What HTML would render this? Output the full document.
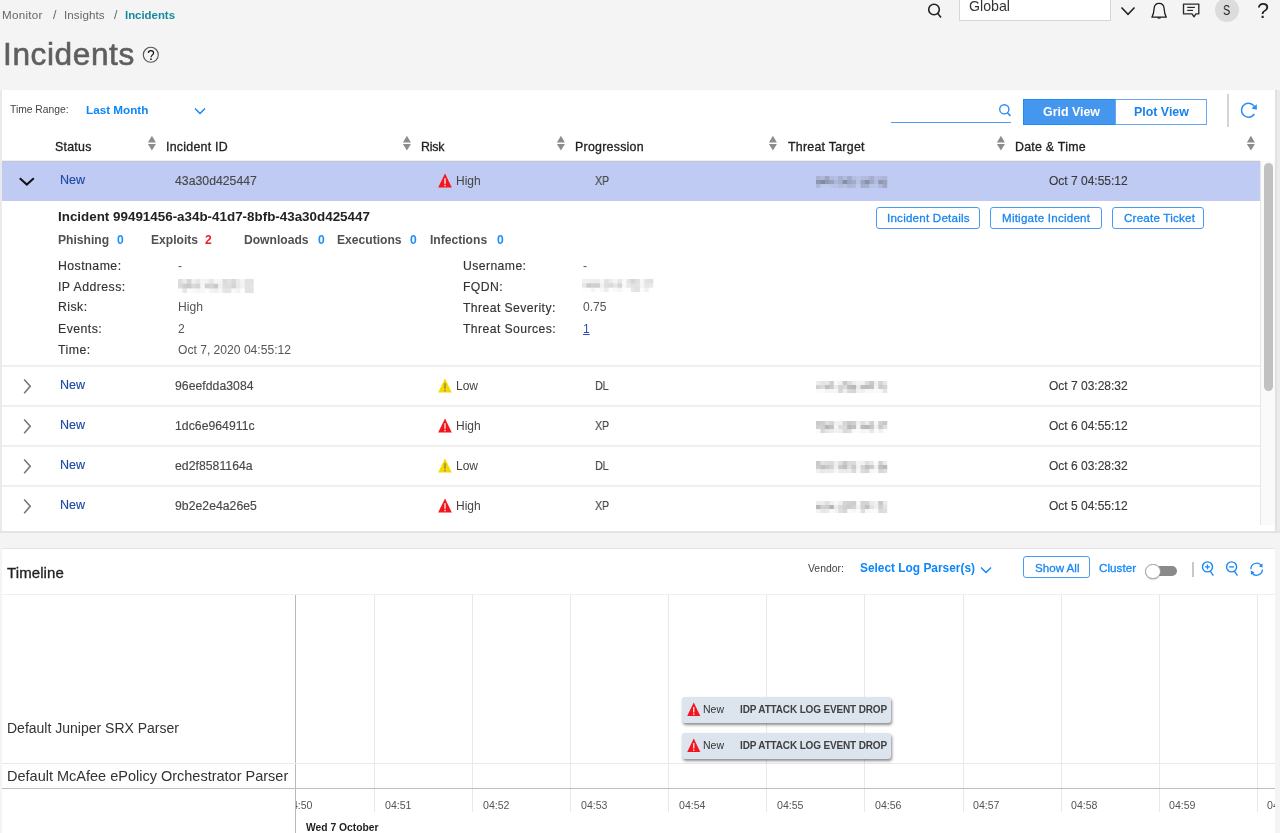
<!DOCTYPE html>
<html><head><meta charset="utf-8"><title>Incidents</title>
<style>
html,body{margin:0;padding:0}
body{width:1280px;height:833px;overflow:hidden;background:#f4f4f4;position:relative;font-family:'Liberation Sans', sans-serif}
.t{position:absolute;line-height:1;white-space:nowrap;will-change:transform}
.r{position:absolute}
svg.r{overflow:visible}
</style></head><body>
<div class="t" style="left:2.00px;top:8.98px;font-size:11.6px;color:#666;letter-spacing:0.3px;">Monitor</div>
<div class="t" style="left:53.00px;top:9.39px;font-size:12.3px;color:#666;">/</div>
<div class="t" style="left:64.00px;top:8.98px;font-size:11.6px;color:#666;letter-spacing:0.1px;">Insights</div>
<div class="t" style="left:113.50px;top:9.39px;font-size:12.3px;color:#666;">/</div>
<div class="t" style="left:125.00px;top:9.85px;font-size:11.4px;color:#168a9c;font-weight:700;">Incidents</div>
<div class="t" style="left:3.00px;top:38.95px;font-size:31.6px;color:#5e5e5e;letter-spacing:0.6px;-webkit-text-stroke:0.6px currentColor;">Incidents</div>
<svg class="r" style="left:142px;top:46px" width="18" height="18" viewBox="0 0 18 18"><circle cx="8.8" cy="8.8" r="7.5" fill="none" stroke="#555" stroke-width="1.1"/><path d="M6.3,6.9 C6.4,5.4 7.5,4.6 8.9,4.6 C10.5,4.6 11.6,5.5 11.6,6.9 C11.6,8.6 9.2,9.2 9.0,11.3" fill="none" stroke="#111" stroke-width="1.2"/><circle cx="8.95" cy="13.2" r="0.85" fill="#111"/></svg>
<svg class="r" style="left:926px;top:2px" width="18" height="18" viewBox="0 0 18 18"><circle cx="8" cy="7.5" r="5.3" fill="none" stroke="#222" stroke-width="1.6"/><line x1="11.6" y1="11.3" x2="15" y2="15.5" stroke="#222" stroke-width="1.6"/></svg>
<div class="r" style="left:959px;top:-1px;width:152px;height:22px;background:#fff;border:1px solid #d6d6d6;box-sizing:border-box"></div>
<div class="t" style="left:968.50px;top:-1.02px;font-size:14.2px;color:#333;">Global</div>
<svg class="r" style="left:1119px;top:4px" width="18" height="14" viewBox="0 0 18 14"><polyline points="2.5,3.5 9,10.3 15.5,3.5" fill="none" stroke="#222" stroke-width="1.6"/></svg>
<svg class="r" style="left:1149px;top:1px" width="20" height="20" viewBox="0 0 20 20"><path d="M10.1,2.4 C7.4,2.4 5.3,4.5 5.1,7.6 C4.9,11.2 4.5,13.2 2.9,16.2 L17.3,16.2 C15.7,13.2 15.3,11.2 15.1,7.6 C14.9,4.5 12.8,2.4 10.1,2.4 Z" fill="none" stroke="#1a1a1a" stroke-width="1.25" stroke-linejoin="round"/><path d="M8.4,16.3 Q10.1,18.2 11.8,16.3" fill="none" stroke="#1a1a1a" stroke-width="1.2"/></svg>
<svg class="r" style="left:1181px;top:1px" width="20" height="20" viewBox="0 0 20 20"><path d="M2.5,3.1 H17.8 V12.8 H14.9 L13,15.8 L11.1,12.8 H2.5 Z" fill="none" stroke="#2a2a2a" stroke-width="1.35" stroke-linejoin="round"/><line x1="6.2" y1="6.4" x2="13.9" y2="6.4" stroke="#2a2a2a" stroke-width="1.2"/><line x1="6.2" y1="9.4" x2="12" y2="9.4" stroke="#2a2a2a" stroke-width="1.2"/></svg>
<div class="r" style="left:1215px;top:-2px;width:24px;height:24px;border-radius:50%;background:#dcdcdc"></div>
<div class="t" style="left:1222.80px;top:2.98px;font-size:14.2px;color:#1a1a1a;transform:scaleX(0.76);transform-origin:0 0;">S</div>
<div class="t" style="left:1256.50px;top:0.70px;font-size:21.5px;color:#222;">?</div>
<div class="r" style="left:0px;top:90px;width:2px;height:443px;background:#eaeaea"></div>
<div class="r" style="left:1275px;top:90px;width:2px;height:443px;background:#e1e1e1"></div>
<div class="r" style="left:1277px;top:90px;width:3px;height:443px;background:#ebebeb"></div>
<div class="r" style="left:0px;top:531px;width:1280px;height:2px;background:#e3e3e3"></div>
<div class="r" style="left:2px;top:90px;width:1273px;height:441px;background:#fff"></div>
<div class="t" style="left:10.00px;top:105.28px;font-size:10.3px;color:#444;">Time Range:</div>
<div class="t" style="left:85.50px;top:104.20px;font-size:11.7px;color:#0c86fb;font-weight:700;">Last Month</div>
<svg class="r" style="left:193px;top:105px" width="14" height="12" viewBox="0 0 14 12"><polyline points="2,3.5 7,8.5 12,3.5" fill="none" stroke="#0c86fb" stroke-width="1.4"/></svg>
<div class="r" style="left:891px;top:122px;width:120px;height:1px;background:#4a9cf2"></div>
<svg class="r" style="left:997px;top:102px" width="16" height="16" viewBox="0 0 16 16"><circle cx="7.3" cy="7.3" r="4.6" fill="none" stroke="#2b8df5" stroke-width="1.4"/><line x1="10.5" y1="10.7" x2="13.5" y2="14" stroke="#2b8df5" stroke-width="1.6"/></svg>
<div class="r" style="left:1023px;top:99px;width:93px;height:26px;background:#4596ee;border:1px solid #1e8cf0;box-sizing:border-box"></div>
<div class="r" style="left:1115px;top:99px;width:92px;height:26px;background:#fff;border:1px solid #6aa6ee;box-sizing:border-box"></div>
<div class="t" style="left:1042.50px;top:106.30px;font-size:12.4px;color:#fff;font-weight:700;">Grid View</div>
<div class="t" style="left:1133.50px;top:106.30px;font-size:12.4px;color:#1a80ea;font-weight:700;">Plot View</div>
<div class="r" style="left:1227px;top:94px;width:2px;height:33px;background:#d4d4d4"></div>
<svg class="r" style="left:1239px;top:100px" width="20" height="20" viewBox="0 0 20 20"><path d="M16.2,8.2 A7,7 0 1 0 15.4,14" fill="none" stroke="#2b8df5" stroke-width="1.5"/><polygon points="17.8,4.2 17.8,9.8 12.4,8.6" fill="#2b8df5"/></svg>
<div class="t" style="left:55.00px;top:140.80px;font-size:12.4px;color:#222;-webkit-text-stroke:0.3px currentColor;letter-spacing:0.25px;">Status</div>
<div class="t" style="left:166.00px;top:140.80px;font-size:12.4px;color:#222;-webkit-text-stroke:0.3px currentColor;letter-spacing:0.25px;">Incident ID</div>
<div class="t" style="left:421.00px;top:140.80px;font-size:12.4px;color:#222;-webkit-text-stroke:0.3px currentColor;letter-spacing:0.25px;"><span style="letter-spacing:-0.2px">Risk</span></div>
<div class="t" style="left:575.00px;top:140.80px;font-size:12.4px;color:#222;-webkit-text-stroke:0.3px currentColor;letter-spacing:0.25px;">Progression</div>
<div class="t" style="left:787.50px;top:140.80px;font-size:12.4px;color:#222;-webkit-text-stroke:0.3px currentColor;letter-spacing:0.25px;">Threat Target</div>
<div class="t" style="left:1015.00px;top:140.80px;font-size:12.4px;color:#222;-webkit-text-stroke:0.3px currentColor;letter-spacing:0.25px;">Date &amp; Time</div>
<svg class="r" style="left:146.5px;top:135px" width="10" height="17" viewBox="0 0 10 17"><polygon points="4.9,0.7 8.9,7.5 0.9,7.5" fill="#8c8c8c"/><polygon points="0.9,9 8.9,9 4.9,15.4" fill="#8c8c8c"/></svg>
<svg class="r" style="left:401.5px;top:135px" width="10" height="17" viewBox="0 0 10 17"><polygon points="4.9,0.7 8.9,7.5 0.9,7.5" fill="#8c8c8c"/><polygon points="0.9,9 8.9,9 4.9,15.4" fill="#8c8c8c"/></svg>
<svg class="r" style="left:555.5px;top:135px" width="10" height="17" viewBox="0 0 10 17"><polygon points="4.9,0.7 8.9,7.5 0.9,7.5" fill="#8c8c8c"/><polygon points="0.9,9 8.9,9 4.9,15.4" fill="#8c8c8c"/></svg>
<svg class="r" style="left:768px;top:135px" width="10" height="17" viewBox="0 0 10 17"><polygon points="4.9,0.7 8.9,7.5 0.9,7.5" fill="#8c8c8c"/><polygon points="0.9,9 8.9,9 4.9,15.4" fill="#8c8c8c"/></svg>
<svg class="r" style="left:996px;top:135px" width="10" height="17" viewBox="0 0 10 17"><polygon points="4.9,0.7 8.9,7.5 0.9,7.5" fill="#8c8c8c"/><polygon points="0.9,9 8.9,9 4.9,15.4" fill="#8c8c8c"/></svg>
<svg class="r" style="left:1245.5px;top:135px" width="10" height="17" viewBox="0 0 10 17"><polygon points="4.9,0.7 8.9,7.5 0.9,7.5" fill="#8c8c8c"/><polygon points="0.9,9 8.9,9 4.9,15.4" fill="#8c8c8c"/></svg>
<div class="r" style="left:2px;top:160px;width:1258px;height:1px;background:#f0f0f0"></div>
<div class="r" style="left:2px;top:161px;width:1258px;height:40px;background:#bfcbf2;border-top:1px solid #c4c6d4;box-sizing:border-box"></div>
<svg class="r" style="left:17px;top:174px" width="20" height="14" viewBox="0 0 20 14"><polyline points="2.8,4.2 9.8,10.6 16.8,4.2" fill="none" stroke="#111" stroke-width="2"/></svg>
<div class="t" style="left:60.00px;top:174.32px;font-size:12.5px;color:#1d4aa6;-webkit-text-stroke:0.15px currentColor;">New</div>
<div class="t" style="left:175.00px;top:174.57px;font-size:12.2px;color:#484848;-webkit-text-stroke:0.15px currentColor;letter-spacing:0.05px;">43a30d425447</div>
<svg class="r" style="left:437.5px;top:174.2px" width="14" height="14" viewBox="0 0 14 14"><polygon points="7,-0.5 13.8,13.4 0.2,13.4" fill="#f5141e"/><rect x="6.3" y="4.2" width="1.4" height="5.6" fill="#fff" opacity=".9"/><rect x="6.3" y="10.8" width="1.4" height="1.5" fill="#fff" opacity=".9"/></svg>
<div class="t" style="left:455.50px;top:175.04px;font-size:12.0px;color:#444;">High</div>
<div class="t" style="left:595.30px;top:174.93px;font-size:12.6px;color:#484848;-webkit-text-stroke:0.15px currentColor;letter-spacing:-0.3px;transform:scaleX(0.86);transform-origin:0 0;">XP</div>
<div class="t" style="left:1048.50px;top:174.74px;font-size:12.0px;color:#3a3a3a;-webkit-text-stroke:0.15px currentColor;">Oct 7 04:55:12</div>
<svg class="r" style="left:816px;top:176px;filter:blur(0.7px)" width="71.20" height="12"><rect x="0.00" y="0.00" width="4.50" height="4.05" fill="#3a3a3a" fill-opacity="0.17"/><rect x="4.45" y="0.00" width="4.50" height="4.05" fill="#3a3a3a" fill-opacity="0.12"/><rect x="8.90" y="0.00" width="4.50" height="4.05" fill="#3a3a3a" fill-opacity="0.26"/><rect x="13.35" y="0.00" width="4.50" height="4.05" fill="#3a3a3a" fill-opacity="0.10"/><rect x="17.80" y="0.00" width="4.50" height="4.05" fill="#3a3a3a" fill-opacity="0.07"/><rect x="22.25" y="0.00" width="4.50" height="4.05" fill="#3a3a3a" fill-opacity="0.18"/><rect x="26.70" y="0.00" width="4.50" height="4.05" fill="#3a3a3a" fill-opacity="0.10"/><rect x="31.15" y="0.00" width="4.50" height="4.05" fill="#3a3a3a" fill-opacity="0.22"/><rect x="35.60" y="0.00" width="4.50" height="4.05" fill="#3a3a3a" fill-opacity="0.09"/><rect x="40.05" y="0.00" width="4.50" height="4.05" fill="#3a3a3a" fill-opacity="0.06"/><rect x="44.50" y="0.00" width="4.50" height="4.05" fill="#3a3a3a" fill-opacity="0.10"/><rect x="48.95" y="0.00" width="4.50" height="4.05" fill="#3a3a3a" fill-opacity="0.11"/><rect x="53.40" y="0.00" width="4.50" height="4.05" fill="#3a3a3a" fill-opacity="0.20"/><rect x="57.85" y="0.00" width="4.50" height="4.05" fill="#3a3a3a" fill-opacity="0.09"/><rect x="62.30" y="0.00" width="4.50" height="4.05" fill="#3a3a3a" fill-opacity="0.11"/><rect x="66.75" y="0.00" width="4.50" height="4.05" fill="#3a3a3a" fill-opacity="0.14"/><rect x="0.00" y="4.00" width="4.50" height="4.05" fill="#3a3a3a" fill-opacity="0.36"/><rect x="4.45" y="4.00" width="4.50" height="4.05" fill="#3a3a3a" fill-opacity="0.45"/><rect x="8.90" y="4.00" width="4.50" height="4.05" fill="#3a3a3a" fill-opacity="0.34"/><rect x="13.35" y="4.00" width="4.50" height="4.05" fill="#3a3a3a" fill-opacity="0.29"/><rect x="17.80" y="4.00" width="4.50" height="4.05" fill="#3a3a3a" fill-opacity="0.14"/><rect x="22.25" y="4.00" width="4.50" height="4.05" fill="#3a3a3a" fill-opacity="0.19"/><rect x="26.70" y="4.00" width="4.50" height="4.05" fill="#3a3a3a" fill-opacity="0.42"/><rect x="31.15" y="4.00" width="4.50" height="4.05" fill="#3a3a3a" fill-opacity="0.26"/><rect x="35.60" y="4.00" width="4.50" height="4.05" fill="#3a3a3a" fill-opacity="0.22"/><rect x="40.05" y="4.00" width="4.50" height="4.05" fill="#3a3a3a" fill-opacity="0.06"/><rect x="44.50" y="4.00" width="4.50" height="4.05" fill="#3a3a3a" fill-opacity="0.27"/><rect x="48.95" y="4.00" width="4.50" height="4.05" fill="#3a3a3a" fill-opacity="0.41"/><rect x="53.40" y="4.00" width="4.50" height="4.05" fill="#3a3a3a" fill-opacity="0.23"/><rect x="57.85" y="4.00" width="4.50" height="4.05" fill="#3a3a3a" fill-opacity="0.10"/><rect x="62.30" y="4.00" width="4.50" height="4.05" fill="#3a3a3a" fill-opacity="0.36"/><rect x="66.75" y="4.00" width="4.50" height="4.05" fill="#3a3a3a" fill-opacity="0.28"/><rect x="0.00" y="8.00" width="4.50" height="4.05" fill="#3a3a3a" fill-opacity="0.13"/><rect x="4.45" y="8.00" width="4.50" height="4.05" fill="#3a3a3a" fill-opacity="0.02"/><rect x="8.90" y="8.00" width="4.50" height="4.05" fill="#3a3a3a" fill-opacity="0.02"/><rect x="13.35" y="8.00" width="4.50" height="4.05" fill="#3a3a3a" fill-opacity="0.04"/><rect x="17.80" y="8.00" width="4.50" height="4.05" fill="#3a3a3a" fill-opacity="0.05"/><rect x="22.25" y="8.00" width="4.50" height="4.05" fill="#3a3a3a" fill-opacity="0.10"/><rect x="26.70" y="8.00" width="4.50" height="4.05" fill="#3a3a3a" fill-opacity="0.07"/><rect x="31.15" y="8.00" width="4.50" height="4.05" fill="#3a3a3a" fill-opacity="0.14"/><rect x="35.60" y="8.00" width="4.50" height="4.05" fill="#3a3a3a" fill-opacity="0.11"/><rect x="40.05" y="8.00" width="4.50" height="4.05" fill="#3a3a3a" fill-opacity="0.02"/><rect x="44.50" y="8.00" width="4.50" height="4.05" fill="#3a3a3a" fill-opacity="0.20"/><rect x="48.95" y="8.00" width="4.50" height="4.05" fill="#3a3a3a" fill-opacity="0.18"/><rect x="53.40" y="8.00" width="4.50" height="4.05" fill="#3a3a3a" fill-opacity="0.05"/><rect x="57.85" y="8.00" width="4.50" height="4.05" fill="#3a3a3a" fill-opacity="0.04"/><rect x="62.30" y="8.00" width="4.50" height="4.05" fill="#3a3a3a" fill-opacity="0.13"/><rect x="66.75" y="8.00" width="4.50" height="4.05" fill="#3a3a3a" fill-opacity="0.23"/></svg>
<div class="t" style="left:58.00px;top:210.06px;font-size:13.4px;color:#222;font-weight:700;">Incident 99491456-a34b-41d7-8bfb-43a30d425447</div>
<div class="t" style="left:57.60px;top:234.46px;font-size:12.1px;color:#505050;font-weight:700;">Phishing</div>
<div class="t" style="left:116.60px;top:234.46px;font-size:12.1px;color:#1e8ef5;font-weight:700;">0</div>
<div class="t" style="left:150.60px;top:234.46px;font-size:12.1px;color:#505050;font-weight:700;">Exploits</div>
<div class="t" style="left:205.10px;top:234.46px;font-size:12.1px;color:#e8202a;font-weight:700;">2</div>
<div class="t" style="left:243.60px;top:234.46px;font-size:12.1px;color:#505050;font-weight:700;">Downloads</div>
<div class="t" style="left:317.50px;top:234.46px;font-size:12.1px;color:#1e8ef5;font-weight:700;">0</div>
<div class="t" style="left:336.60px;top:234.46px;font-size:12.1px;color:#505050;font-weight:700;">Executions</div>
<div class="t" style="left:410.10px;top:234.46px;font-size:12.1px;color:#1e8ef5;font-weight:700;">0</div>
<div class="t" style="left:430.10px;top:234.46px;font-size:12.1px;color:#505050;font-weight:700;">Infections</div>
<div class="t" style="left:497.40px;top:234.46px;font-size:12.1px;color:#1e8ef5;font-weight:700;">0</div>
<div class="r" style="left:876px;top:207px;width:104px;height:22px;background:#fff;border:1px solid #4a9cf2;border-radius:3px;box-sizing:border-box"></div>
<div class="t" style="left:887.00px;top:211.88px;font-size:11.6px;color:#1a86f0;-webkit-text-stroke:0.3px currentColor;letter-spacing:0.22px;">Incident Details</div>
<div class="r" style="left:990px;top:207px;width:112px;height:22px;background:#fff;border:1px solid #4a9cf2;border-radius:3px;box-sizing:border-box"></div>
<div class="t" style="left:1001.50px;top:211.88px;font-size:11.6px;color:#1a86f0;-webkit-text-stroke:0.3px currentColor;letter-spacing:0.22px;">Mitigate Incident</div>
<div class="r" style="left:1112px;top:207px;width:92px;height:22px;background:#fff;border:1px solid #4a9cf2;border-radius:3px;box-sizing:border-box"></div>
<div class="t" style="left:1123.50px;top:211.88px;font-size:11.6px;color:#1a86f0;-webkit-text-stroke:0.3px currentColor;letter-spacing:0.22px;">Create Ticket</div>
<div class="t" style="left:57.80px;top:259.89px;font-size:12.3px;color:#333;-webkit-text-stroke:0.15px currentColor;letter-spacing:0.45px;">Hostname:</div>
<div class="t" style="left:178.00px;top:259.66px;font-size:12.1px;color:#555;">-</div>
<div class="t" style="left:57.80px;top:280.79px;font-size:12.3px;color:#333;-webkit-text-stroke:0.15px currentColor;letter-spacing:0.45px;">IP Address:</div>
<div class="t" style="left:57.80px;top:301.49px;font-size:12.3px;color:#333;-webkit-text-stroke:0.15px currentColor;letter-spacing:0.45px;">Risk:</div>
<div class="t" style="left:178.00px;top:301.26px;font-size:12.1px;color:#555;">High</div>
<div class="t" style="left:57.80px;top:322.79px;font-size:12.3px;color:#333;-webkit-text-stroke:0.15px currentColor;letter-spacing:0.45px;">Events:</div>
<div class="t" style="left:178.00px;top:322.56px;font-size:12.1px;color:#555;">2</div>
<div class="t" style="left:57.80px;top:343.99px;font-size:12.3px;color:#333;-webkit-text-stroke:0.15px currentColor;letter-spacing:0.45px;">Time:</div>
<div class="t" style="left:178.00px;top:343.76px;font-size:12.1px;color:#555;">Oct 7, 2020 04:55:12</div>
<svg class="r" style="left:178px;top:279px;filter:blur(0.7px)" width="75.65" height="14"><rect x="0.00" y="0.00" width="4.50" height="4.72" fill="#3a3a3a" fill-opacity="0.17"/><rect x="4.45" y="0.00" width="4.50" height="4.72" fill="#3a3a3a" fill-opacity="0.10"/><rect x="8.90" y="0.00" width="4.50" height="4.72" fill="#3a3a3a" fill-opacity="0.21"/><rect x="13.35" y="0.00" width="4.50" height="4.72" fill="#3a3a3a" fill-opacity="0.07"/><rect x="17.80" y="0.00" width="4.50" height="4.72" fill="#3a3a3a" fill-opacity="0.12"/><rect x="22.25" y="0.00" width="4.50" height="4.72" fill="#3a3a3a" fill-opacity="0.05"/><rect x="26.70" y="0.00" width="4.50" height="4.72" fill="#3a3a3a" fill-opacity="0.07"/><rect x="31.15" y="0.00" width="4.50" height="4.72" fill="#3a3a3a" fill-opacity="0.13"/><rect x="35.60" y="0.00" width="4.50" height="4.72" fill="#3a3a3a" fill-opacity="0.05"/><rect x="40.05" y="0.00" width="4.50" height="4.72" fill="#3a3a3a" fill-opacity="0.05"/><rect x="44.50" y="0.00" width="4.50" height="4.72" fill="#3a3a3a" fill-opacity="0.18"/><rect x="48.95" y="0.00" width="4.50" height="4.72" fill="#3a3a3a" fill-opacity="0.14"/><rect x="53.40" y="0.00" width="4.50" height="4.72" fill="#3a3a3a" fill-opacity="0.20"/><rect x="57.85" y="0.00" width="4.50" height="4.72" fill="#3a3a3a" fill-opacity="0.10"/><rect x="62.30" y="0.00" width="4.50" height="4.72" fill="#3a3a3a" fill-opacity="0.05"/><rect x="66.75" y="0.00" width="4.50" height="4.72" fill="#3a3a3a" fill-opacity="0.15"/><rect x="71.20" y="0.00" width="4.50" height="4.72" fill="#3a3a3a" fill-opacity="0.15"/><rect x="0.00" y="4.67" width="4.50" height="4.72" fill="#3a3a3a" fill-opacity="0.18"/><rect x="4.45" y="4.67" width="4.50" height="4.72" fill="#3a3a3a" fill-opacity="0.25"/><rect x="8.90" y="4.67" width="4.50" height="4.72" fill="#3a3a3a" fill-opacity="0.27"/><rect x="13.35" y="4.67" width="4.50" height="4.72" fill="#3a3a3a" fill-opacity="0.19"/><rect x="17.80" y="4.67" width="4.50" height="4.72" fill="#3a3a3a" fill-opacity="0.22"/><rect x="22.25" y="4.67" width="4.50" height="4.72" fill="#3a3a3a" fill-opacity="0.04"/><rect x="26.70" y="4.67" width="4.50" height="4.72" fill="#3a3a3a" fill-opacity="0.23"/><rect x="31.15" y="4.67" width="4.50" height="4.72" fill="#3a3a3a" fill-opacity="0.22"/><rect x="35.60" y="4.67" width="4.50" height="4.72" fill="#3a3a3a" fill-opacity="0.27"/><rect x="40.05" y="4.67" width="4.50" height="4.72" fill="#3a3a3a" fill-opacity="0.07"/><rect x="44.50" y="4.67" width="4.50" height="4.72" fill="#3a3a3a" fill-opacity="0.16"/><rect x="48.95" y="4.67" width="4.50" height="4.72" fill="#3a3a3a" fill-opacity="0.17"/><rect x="53.40" y="4.67" width="4.50" height="4.72" fill="#3a3a3a" fill-opacity="0.22"/><rect x="57.85" y="4.67" width="4.50" height="4.72" fill="#3a3a3a" fill-opacity="0.11"/><rect x="62.30" y="4.67" width="4.50" height="4.72" fill="#3a3a3a" fill-opacity="0.06"/><rect x="66.75" y="4.67" width="4.50" height="4.72" fill="#3a3a3a" fill-opacity="0.14"/><rect x="71.20" y="4.67" width="4.50" height="4.72" fill="#3a3a3a" fill-opacity="0.13"/><rect x="0.00" y="9.33" width="4.50" height="4.72" fill="#3a3a3a" fill-opacity="0.01"/><rect x="4.45" y="9.33" width="4.50" height="4.72" fill="#3a3a3a" fill-opacity="0.12"/><rect x="8.90" y="9.33" width="4.50" height="4.72" fill="#3a3a3a" fill-opacity="0.01"/><rect x="13.35" y="9.33" width="4.50" height="4.72" fill="#3a3a3a" fill-opacity="0.03"/><rect x="17.80" y="9.33" width="4.50" height="4.72" fill="#3a3a3a" fill-opacity="0.05"/><rect x="22.25" y="9.33" width="4.50" height="4.72" fill="#3a3a3a" fill-opacity="0.04"/><rect x="26.70" y="9.33" width="4.50" height="4.72" fill="#3a3a3a" fill-opacity="0.01"/><rect x="31.15" y="9.33" width="4.50" height="4.72" fill="#3a3a3a" fill-opacity="0.06"/><rect x="35.60" y="9.33" width="4.50" height="4.72" fill="#3a3a3a" fill-opacity="0.08"/><rect x="40.05" y="9.33" width="4.50" height="4.72" fill="#3a3a3a" fill-opacity="0.04"/><rect x="44.50" y="9.33" width="4.50" height="4.72" fill="#3a3a3a" fill-opacity="0.13"/><rect x="48.95" y="9.33" width="4.50" height="4.72" fill="#3a3a3a" fill-opacity="0.13"/><rect x="53.40" y="9.33" width="4.50" height="4.72" fill="#3a3a3a" fill-opacity="0.03"/><rect x="57.85" y="9.33" width="4.50" height="4.72" fill="#3a3a3a" fill-opacity="0.06"/><rect x="62.30" y="9.33" width="4.50" height="4.72" fill="#3a3a3a" fill-opacity="0.01"/><rect x="66.75" y="9.33" width="4.50" height="4.72" fill="#3a3a3a" fill-opacity="0.14"/><rect x="71.20" y="9.33" width="4.50" height="4.72" fill="#3a3a3a" fill-opacity="0.15"/></svg>
<div class="t" style="left:462.80px;top:259.97px;font-size:12.2px;color:#333;-webkit-text-stroke:0.15px currentColor;letter-spacing:0.42px;">Username:</div>
<div class="t" style="left:582.50px;top:259.66px;font-size:12.1px;color:#555;">-</div>
<div class="t" style="left:462.80px;top:280.87px;font-size:12.2px;color:#333;-webkit-text-stroke:0.15px currentColor;letter-spacing:0.42px;">FQDN:</div>
<div class="t" style="left:462.80px;top:301.57px;font-size:12.2px;color:#333;-webkit-text-stroke:0.15px currentColor;letter-spacing:0.42px;">Threat Severity:</div>
<div class="t" style="left:582.50px;top:301.26px;font-size:12.1px;color:#555;">0.75</div>
<div class="t" style="left:462.80px;top:322.87px;font-size:12.2px;color:#333;-webkit-text-stroke:0.15px currentColor;letter-spacing:0.42px;">Threat Sources:</div>
<div class="t" style="left:582.50px;top:322.56px;font-size:12.1px;color:#2a4fb0;"><u>1</u></div>
<svg class="r" style="left:582px;top:279px;filter:blur(0.7px)" width="71.20" height="13"><rect x="0.00" y="0.00" width="4.50" height="4.38" fill="#3a3a3a" fill-opacity="0.07"/><rect x="4.45" y="0.00" width="4.50" height="4.38" fill="#3a3a3a" fill-opacity="0.08"/><rect x="8.90" y="0.00" width="4.50" height="4.38" fill="#3a3a3a" fill-opacity="0.09"/><rect x="13.35" y="0.00" width="4.50" height="4.38" fill="#3a3a3a" fill-opacity="0.09"/><rect x="17.80" y="0.00" width="4.50" height="4.38" fill="#3a3a3a" fill-opacity="0.04"/><rect x="22.25" y="0.00" width="4.50" height="4.38" fill="#3a3a3a" fill-opacity="0.15"/><rect x="26.70" y="0.00" width="4.50" height="4.38" fill="#3a3a3a" fill-opacity="0.09"/><rect x="31.15" y="0.00" width="4.50" height="4.38" fill="#3a3a3a" fill-opacity="0.05"/><rect x="35.60" y="0.00" width="4.50" height="4.38" fill="#3a3a3a" fill-opacity="0.12"/><rect x="40.05" y="0.00" width="4.50" height="4.38" fill="#3a3a3a" fill-opacity="0.03"/><rect x="44.50" y="0.00" width="4.50" height="4.38" fill="#3a3a3a" fill-opacity="0.14"/><rect x="48.95" y="0.00" width="4.50" height="4.38" fill="#3a3a3a" fill-opacity="0.21"/><rect x="53.40" y="0.00" width="4.50" height="4.38" fill="#3a3a3a" fill-opacity="0.16"/><rect x="57.85" y="0.00" width="4.50" height="4.38" fill="#3a3a3a" fill-opacity="0.04"/><rect x="62.30" y="0.00" width="4.50" height="4.38" fill="#3a3a3a" fill-opacity="0.15"/><rect x="66.75" y="0.00" width="4.50" height="4.38" fill="#3a3a3a" fill-opacity="0.16"/><rect x="0.00" y="4.33" width="4.50" height="4.38" fill="#3a3a3a" fill-opacity="0.12"/><rect x="4.45" y="4.33" width="4.50" height="4.38" fill="#3a3a3a" fill-opacity="0.26"/><rect x="8.90" y="4.33" width="4.50" height="4.38" fill="#3a3a3a" fill-opacity="0.24"/><rect x="13.35" y="4.33" width="4.50" height="4.38" fill="#3a3a3a" fill-opacity="0.25"/><rect x="17.80" y="4.33" width="4.50" height="4.38" fill="#3a3a3a" fill-opacity="0.07"/><rect x="22.25" y="4.33" width="4.50" height="4.38" fill="#3a3a3a" fill-opacity="0.17"/><rect x="26.70" y="4.33" width="4.50" height="4.38" fill="#3a3a3a" fill-opacity="0.18"/><rect x="31.15" y="4.33" width="4.50" height="4.38" fill="#3a3a3a" fill-opacity="0.13"/><rect x="35.60" y="4.33" width="4.50" height="4.38" fill="#3a3a3a" fill-opacity="0.21"/><rect x="40.05" y="4.33" width="4.50" height="4.38" fill="#3a3a3a" fill-opacity="0.04"/><rect x="44.50" y="4.33" width="4.50" height="4.38" fill="#3a3a3a" fill-opacity="0.12"/><rect x="48.95" y="4.33" width="4.50" height="4.38" fill="#3a3a3a" fill-opacity="0.14"/><rect x="53.40" y="4.33" width="4.50" height="4.38" fill="#3a3a3a" fill-opacity="0.14"/><rect x="57.85" y="4.33" width="4.50" height="4.38" fill="#3a3a3a" fill-opacity="0.05"/><rect x="62.30" y="4.33" width="4.50" height="4.38" fill="#3a3a3a" fill-opacity="0.12"/><rect x="66.75" y="4.33" width="4.50" height="4.38" fill="#3a3a3a" fill-opacity="0.11"/><rect x="0.00" y="8.67" width="4.50" height="4.38" fill="#3a3a3a" fill-opacity="0.01"/><rect x="4.45" y="8.67" width="4.50" height="4.38" fill="#3a3a3a" fill-opacity="0.01"/><rect x="8.90" y="8.67" width="4.50" height="4.38" fill="#3a3a3a" fill-opacity="0.05"/><rect x="13.35" y="8.67" width="4.50" height="4.38" fill="#3a3a3a" fill-opacity="0.01"/><rect x="17.80" y="8.67" width="4.50" height="4.38" fill="#3a3a3a" fill-opacity="0.04"/><rect x="22.25" y="8.67" width="4.50" height="4.38" fill="#3a3a3a" fill-opacity="0.09"/><rect x="26.70" y="8.67" width="4.50" height="4.38" fill="#3a3a3a" fill-opacity="0.01"/><rect x="31.15" y="8.67" width="4.50" height="4.38" fill="#3a3a3a" fill-opacity="0.03"/><rect x="35.60" y="8.67" width="4.50" height="4.38" fill="#3a3a3a" fill-opacity="0.05"/><rect x="40.05" y="8.67" width="4.50" height="4.38" fill="#3a3a3a" fill-opacity="0.01"/><rect x="44.50" y="8.67" width="4.50" height="4.38" fill="#3a3a3a" fill-opacity="0.01"/><rect x="48.95" y="8.67" width="4.50" height="4.38" fill="#3a3a3a" fill-opacity="0.13"/><rect x="53.40" y="8.67" width="4.50" height="4.38" fill="#3a3a3a" fill-opacity="0.15"/><rect x="57.85" y="8.67" width="4.50" height="4.38" fill="#3a3a3a" fill-opacity="0.02"/><rect x="62.30" y="8.67" width="4.50" height="4.38" fill="#3a3a3a" fill-opacity="0.07"/><rect x="66.75" y="8.67" width="4.50" height="4.38" fill="#3a3a3a" fill-opacity="0.01"/></svg>
<div class="r" style="left:2px;top:365px;width:1258px;height:2px;background:#f0f0f0"></div>
<svg class="r" style="left:20px;top:377px" width="14" height="20" viewBox="0 0 14 20"><polyline points="4.2,2.5 10.2,9.3 4.2,16.3" fill="none" stroke="#777" stroke-width="1.6"/></svg>
<div class="t" style="left:60.00px;top:379.32px;font-size:12.5px;color:#1d4aa6;-webkit-text-stroke:0.15px currentColor;">New</div>
<div class="t" style="left:175.00px;top:379.57px;font-size:12.2px;color:#484848;-webkit-text-stroke:0.15px currentColor;letter-spacing:0.05px;">96eefdda3084</div>
<svg class="r" style="left:437.5px;top:379.0px" width="14" height="14" viewBox="0 0 14 14"><polygon points="7,-0.5 13.8,13.4 0.2,13.4" fill="#f7d700"/><rect x="6.3" y="4.2" width="1.4" height="5.6" fill="#777" opacity=".9"/><rect x="6.3" y="10.8" width="1.4" height="1.5" fill="#777" opacity=".9"/></svg>
<div class="t" style="left:455.50px;top:380.04px;font-size:12.0px;color:#444;">Low</div>
<div class="t" style="left:595.30px;top:379.93px;font-size:12.6px;color:#484848;-webkit-text-stroke:0.15px currentColor;letter-spacing:-0.3px;transform:scaleX(0.86);transform-origin:0 0;">DL</div>
<div class="t" style="left:1048.50px;top:379.74px;font-size:12.0px;color:#3a3a3a;-webkit-text-stroke:0.15px currentColor;">Oct 7 03:28:32</div>
<svg class="r" style="left:816px;top:381px;filter:blur(0.7px)" width="71.20" height="12"><rect x="0.00" y="0.00" width="4.50" height="4.05" fill="#3a3a3a" fill-opacity="0.09"/><rect x="4.45" y="0.00" width="4.50" height="4.05" fill="#3a3a3a" fill-opacity="0.14"/><rect x="8.90" y="0.00" width="4.50" height="4.05" fill="#3a3a3a" fill-opacity="0.12"/><rect x="13.35" y="0.00" width="4.50" height="4.05" fill="#3a3a3a" fill-opacity="0.25"/><rect x="17.80" y="0.00" width="4.50" height="4.05" fill="#3a3a3a" fill-opacity="0.03"/><rect x="22.25" y="0.00" width="4.50" height="4.05" fill="#3a3a3a" fill-opacity="0.07"/><rect x="26.70" y="0.00" width="4.50" height="4.05" fill="#3a3a3a" fill-opacity="0.28"/><rect x="31.15" y="0.00" width="4.50" height="4.05" fill="#3a3a3a" fill-opacity="0.18"/><rect x="35.60" y="0.00" width="4.50" height="4.05" fill="#3a3a3a" fill-opacity="0.10"/><rect x="40.05" y="0.00" width="4.50" height="4.05" fill="#3a3a3a" fill-opacity="0.06"/><rect x="44.50" y="0.00" width="4.50" height="4.05" fill="#3a3a3a" fill-opacity="0.07"/><rect x="48.95" y="0.00" width="4.50" height="4.05" fill="#3a3a3a" fill-opacity="0.18"/><rect x="53.40" y="0.00" width="4.50" height="4.05" fill="#3a3a3a" fill-opacity="0.28"/><rect x="57.85" y="0.00" width="4.50" height="4.05" fill="#3a3a3a" fill-opacity="0.08"/><rect x="62.30" y="0.00" width="4.50" height="4.05" fill="#3a3a3a" fill-opacity="0.22"/><rect x="66.75" y="0.00" width="4.50" height="4.05" fill="#3a3a3a" fill-opacity="0.12"/><rect x="0.00" y="4.00" width="4.50" height="4.05" fill="#3a3a3a" fill-opacity="0.23"/><rect x="4.45" y="4.00" width="4.50" height="4.05" fill="#3a3a3a" fill-opacity="0.18"/><rect x="8.90" y="4.00" width="4.50" height="4.05" fill="#3a3a3a" fill-opacity="0.32"/><rect x="13.35" y="4.00" width="4.50" height="4.05" fill="#3a3a3a" fill-opacity="0.26"/><rect x="17.80" y="4.00" width="4.50" height="4.05" fill="#3a3a3a" fill-opacity="0.10"/><rect x="22.25" y="4.00" width="4.50" height="4.05" fill="#3a3a3a" fill-opacity="0.22"/><rect x="26.70" y="4.00" width="4.50" height="4.05" fill="#3a3a3a" fill-opacity="0.19"/><rect x="31.15" y="4.00" width="4.50" height="4.05" fill="#3a3a3a" fill-opacity="0.33"/><rect x="35.60" y="4.00" width="4.50" height="4.05" fill="#3a3a3a" fill-opacity="0.36"/><rect x="40.05" y="4.00" width="4.50" height="4.05" fill="#3a3a3a" fill-opacity="0.10"/><rect x="44.50" y="4.00" width="4.50" height="4.05" fill="#3a3a3a" fill-opacity="0.32"/><rect x="48.95" y="4.00" width="4.50" height="4.05" fill="#3a3a3a" fill-opacity="0.33"/><rect x="53.40" y="4.00" width="4.50" height="4.05" fill="#3a3a3a" fill-opacity="0.31"/><rect x="57.85" y="4.00" width="4.50" height="4.05" fill="#3a3a3a" fill-opacity="0.06"/><rect x="62.30" y="4.00" width="4.50" height="4.05" fill="#3a3a3a" fill-opacity="0.26"/><rect x="66.75" y="4.00" width="4.50" height="4.05" fill="#3a3a3a" fill-opacity="0.22"/><rect x="0.00" y="8.00" width="4.50" height="4.05" fill="#3a3a3a" fill-opacity="0.02"/><rect x="4.45" y="8.00" width="4.50" height="4.05" fill="#3a3a3a" fill-opacity="0.02"/><rect x="8.90" y="8.00" width="4.50" height="4.05" fill="#3a3a3a" fill-opacity="0.05"/><rect x="13.35" y="8.00" width="4.50" height="4.05" fill="#3a3a3a" fill-opacity="0.04"/><rect x="17.80" y="8.00" width="4.50" height="4.05" fill="#3a3a3a" fill-opacity="0.04"/><rect x="22.25" y="8.00" width="4.50" height="4.05" fill="#3a3a3a" fill-opacity="0.20"/><rect x="26.70" y="8.00" width="4.50" height="4.05" fill="#3a3a3a" fill-opacity="0.08"/><rect x="31.15" y="8.00" width="4.50" height="4.05" fill="#3a3a3a" fill-opacity="0.19"/><rect x="35.60" y="8.00" width="4.50" height="4.05" fill="#3a3a3a" fill-opacity="0.21"/><rect x="40.05" y="8.00" width="4.50" height="4.05" fill="#3a3a3a" fill-opacity="0.06"/><rect x="44.50" y="8.00" width="4.50" height="4.05" fill="#3a3a3a" fill-opacity="0.07"/><rect x="48.95" y="8.00" width="4.50" height="4.05" fill="#3a3a3a" fill-opacity="0.03"/><rect x="53.40" y="8.00" width="4.50" height="4.05" fill="#3a3a3a" fill-opacity="0.03"/><rect x="57.85" y="8.00" width="4.50" height="4.05" fill="#3a3a3a" fill-opacity="0.02"/><rect x="62.30" y="8.00" width="4.50" height="4.05" fill="#3a3a3a" fill-opacity="0.03"/><rect x="66.75" y="8.00" width="4.50" height="4.05" fill="#3a3a3a" fill-opacity="0.12"/></svg>
<div class="r" style="left:2px;top:405px;width:1258px;height:2px;background:#f0f0f0"></div>
<svg class="r" style="left:20px;top:417px" width="14" height="20" viewBox="0 0 14 20"><polyline points="4.2,2.5 10.2,9.3 4.2,16.3" fill="none" stroke="#777" stroke-width="1.6"/></svg>
<div class="t" style="left:60.00px;top:419.32px;font-size:12.5px;color:#1d4aa6;-webkit-text-stroke:0.15px currentColor;">New</div>
<div class="t" style="left:175.00px;top:419.57px;font-size:12.2px;color:#484848;-webkit-text-stroke:0.15px currentColor;letter-spacing:0.05px;">1dc6e964911c</div>
<svg class="r" style="left:437.5px;top:419.2px" width="14" height="14" viewBox="0 0 14 14"><polygon points="7,-0.5 13.8,13.4 0.2,13.4" fill="#f5141e"/><rect x="6.3" y="4.2" width="1.4" height="5.6" fill="#fff" opacity=".9"/><rect x="6.3" y="10.8" width="1.4" height="1.5" fill="#fff" opacity=".9"/></svg>
<div class="t" style="left:455.50px;top:420.04px;font-size:12.0px;color:#444;">High</div>
<div class="t" style="left:595.30px;top:419.93px;font-size:12.6px;color:#484848;-webkit-text-stroke:0.15px currentColor;letter-spacing:-0.3px;transform:scaleX(0.86);transform-origin:0 0;">XP</div>
<div class="t" style="left:1048.50px;top:419.74px;font-size:12.0px;color:#3a3a3a;-webkit-text-stroke:0.15px currentColor;">Oct 6 04:55:12</div>
<svg class="r" style="left:816px;top:421px;filter:blur(0.7px)" width="71.20" height="12"><rect x="0.00" y="0.00" width="4.50" height="4.05" fill="#3a3a3a" fill-opacity="0.27"/><rect x="4.45" y="0.00" width="4.50" height="4.05" fill="#3a3a3a" fill-opacity="0.25"/><rect x="8.90" y="0.00" width="4.50" height="4.05" fill="#3a3a3a" fill-opacity="0.17"/><rect x="13.35" y="0.00" width="4.50" height="4.05" fill="#3a3a3a" fill-opacity="0.21"/><rect x="17.80" y="0.00" width="4.50" height="4.05" fill="#3a3a3a" fill-opacity="0.07"/><rect x="22.25" y="0.00" width="4.50" height="4.05" fill="#3a3a3a" fill-opacity="0.08"/><rect x="26.70" y="0.00" width="4.50" height="4.05" fill="#3a3a3a" fill-opacity="0.21"/><rect x="31.15" y="0.00" width="4.50" height="4.05" fill="#3a3a3a" fill-opacity="0.27"/><rect x="35.60" y="0.00" width="4.50" height="4.05" fill="#3a3a3a" fill-opacity="0.24"/><rect x="40.05" y="0.00" width="4.50" height="4.05" fill="#3a3a3a" fill-opacity="0.07"/><rect x="44.50" y="0.00" width="4.50" height="4.05" fill="#3a3a3a" fill-opacity="0.17"/><rect x="48.95" y="0.00" width="4.50" height="4.05" fill="#3a3a3a" fill-opacity="0.10"/><rect x="53.40" y="0.00" width="4.50" height="4.05" fill="#3a3a3a" fill-opacity="0.24"/><rect x="57.85" y="0.00" width="4.50" height="4.05" fill="#3a3a3a" fill-opacity="0.04"/><rect x="62.30" y="0.00" width="4.50" height="4.05" fill="#3a3a3a" fill-opacity="0.24"/><rect x="66.75" y="0.00" width="4.50" height="4.05" fill="#3a3a3a" fill-opacity="0.28"/><rect x="0.00" y="4.00" width="4.50" height="4.05" fill="#3a3a3a" fill-opacity="0.23"/><rect x="4.45" y="4.00" width="4.50" height="4.05" fill="#3a3a3a" fill-opacity="0.23"/><rect x="8.90" y="4.00" width="4.50" height="4.05" fill="#3a3a3a" fill-opacity="0.36"/><rect x="13.35" y="4.00" width="4.50" height="4.05" fill="#3a3a3a" fill-opacity="0.31"/><rect x="17.80" y="4.00" width="4.50" height="4.05" fill="#3a3a3a" fill-opacity="0.05"/><rect x="22.25" y="4.00" width="4.50" height="4.05" fill="#3a3a3a" fill-opacity="0.17"/><rect x="26.70" y="4.00" width="4.50" height="4.05" fill="#3a3a3a" fill-opacity="0.18"/><rect x="31.15" y="4.00" width="4.50" height="4.05" fill="#3a3a3a" fill-opacity="0.35"/><rect x="35.60" y="4.00" width="4.50" height="4.05" fill="#3a3a3a" fill-opacity="0.32"/><rect x="40.05" y="4.00" width="4.50" height="4.05" fill="#3a3a3a" fill-opacity="0.05"/><rect x="44.50" y="4.00" width="4.50" height="4.05" fill="#3a3a3a" fill-opacity="0.33"/><rect x="48.95" y="4.00" width="4.50" height="4.05" fill="#3a3a3a" fill-opacity="0.36"/><rect x="53.40" y="4.00" width="4.50" height="4.05" fill="#3a3a3a" fill-opacity="0.29"/><rect x="57.85" y="4.00" width="4.50" height="4.05" fill="#3a3a3a" fill-opacity="0.07"/><rect x="62.30" y="4.00" width="4.50" height="4.05" fill="#3a3a3a" fill-opacity="0.27"/><rect x="66.75" y="4.00" width="4.50" height="4.05" fill="#3a3a3a" fill-opacity="0.17"/><rect x="0.00" y="8.00" width="4.50" height="4.05" fill="#3a3a3a" fill-opacity="0.02"/><rect x="4.45" y="8.00" width="4.50" height="4.05" fill="#3a3a3a" fill-opacity="0.20"/><rect x="8.90" y="8.00" width="4.50" height="4.05" fill="#3a3a3a" fill-opacity="0.13"/><rect x="13.35" y="8.00" width="4.50" height="4.05" fill="#3a3a3a" fill-opacity="0.10"/><rect x="17.80" y="8.00" width="4.50" height="4.05" fill="#3a3a3a" fill-opacity="0.06"/><rect x="22.25" y="8.00" width="4.50" height="4.05" fill="#3a3a3a" fill-opacity="0.08"/><rect x="26.70" y="8.00" width="4.50" height="4.05" fill="#3a3a3a" fill-opacity="0.18"/><rect x="31.15" y="8.00" width="4.50" height="4.05" fill="#3a3a3a" fill-opacity="0.17"/><rect x="35.60" y="8.00" width="4.50" height="4.05" fill="#3a3a3a" fill-opacity="0.03"/><rect x="40.05" y="8.00" width="4.50" height="4.05" fill="#3a3a3a" fill-opacity="0.02"/><rect x="44.50" y="8.00" width="4.50" height="4.05" fill="#3a3a3a" fill-opacity="0.05"/><rect x="48.95" y="8.00" width="4.50" height="4.05" fill="#3a3a3a" fill-opacity="0.04"/><rect x="53.40" y="8.00" width="4.50" height="4.05" fill="#3a3a3a" fill-opacity="0.12"/><rect x="57.85" y="8.00" width="4.50" height="4.05" fill="#3a3a3a" fill-opacity="0.02"/><rect x="62.30" y="8.00" width="4.50" height="4.05" fill="#3a3a3a" fill-opacity="0.08"/><rect x="66.75" y="8.00" width="4.50" height="4.05" fill="#3a3a3a" fill-opacity="0.02"/></svg>
<div class="r" style="left:2px;top:445px;width:1258px;height:2px;background:#f0f0f0"></div>
<svg class="r" style="left:20px;top:457px" width="14" height="20" viewBox="0 0 14 20"><polyline points="4.2,2.5 10.2,9.3 4.2,16.3" fill="none" stroke="#777" stroke-width="1.6"/></svg>
<div class="t" style="left:60.00px;top:459.32px;font-size:12.5px;color:#1d4aa6;-webkit-text-stroke:0.15px currentColor;">New</div>
<div class="t" style="left:175.00px;top:459.57px;font-size:12.2px;color:#484848;-webkit-text-stroke:0.15px currentColor;letter-spacing:0.05px;">ed2f8581164a</div>
<svg class="r" style="left:437.5px;top:459.0px" width="14" height="14" viewBox="0 0 14 14"><polygon points="7,-0.5 13.8,13.4 0.2,13.4" fill="#f7d700"/><rect x="6.3" y="4.2" width="1.4" height="5.6" fill="#777" opacity=".9"/><rect x="6.3" y="10.8" width="1.4" height="1.5" fill="#777" opacity=".9"/></svg>
<div class="t" style="left:455.50px;top:460.04px;font-size:12.0px;color:#444;">Low</div>
<div class="t" style="left:595.30px;top:459.93px;font-size:12.6px;color:#484848;-webkit-text-stroke:0.15px currentColor;letter-spacing:-0.3px;transform:scaleX(0.86);transform-origin:0 0;">DL</div>
<div class="t" style="left:1048.50px;top:459.74px;font-size:12.0px;color:#3a3a3a;-webkit-text-stroke:0.15px currentColor;">Oct 6 03:28:32</div>
<svg class="r" style="left:816px;top:461px;filter:blur(0.7px)" width="71.20" height="12"><rect x="0.00" y="0.00" width="4.50" height="4.05" fill="#3a3a3a" fill-opacity="0.27"/><rect x="4.45" y="0.00" width="4.50" height="4.05" fill="#3a3a3a" fill-opacity="0.14"/><rect x="8.90" y="0.00" width="4.50" height="4.05" fill="#3a3a3a" fill-opacity="0.17"/><rect x="13.35" y="0.00" width="4.50" height="4.05" fill="#3a3a3a" fill-opacity="0.19"/><rect x="17.80" y="0.00" width="4.50" height="4.05" fill="#3a3a3a" fill-opacity="0.08"/><rect x="22.25" y="0.00" width="4.50" height="4.05" fill="#3a3a3a" fill-opacity="0.16"/><rect x="26.70" y="0.00" width="4.50" height="4.05" fill="#3a3a3a" fill-opacity="0.27"/><rect x="31.15" y="0.00" width="4.50" height="4.05" fill="#3a3a3a" fill-opacity="0.18"/><rect x="35.60" y="0.00" width="4.50" height="4.05" fill="#3a3a3a" fill-opacity="0.18"/><rect x="40.05" y="0.00" width="4.50" height="4.05" fill="#3a3a3a" fill-opacity="0.05"/><rect x="44.50" y="0.00" width="4.50" height="4.05" fill="#3a3a3a" fill-opacity="0.07"/><rect x="48.95" y="0.00" width="4.50" height="4.05" fill="#3a3a3a" fill-opacity="0.16"/><rect x="53.40" y="0.00" width="4.50" height="4.05" fill="#3a3a3a" fill-opacity="0.11"/><rect x="57.85" y="0.00" width="4.50" height="4.05" fill="#3a3a3a" fill-opacity="0.02"/><rect x="62.30" y="0.00" width="4.50" height="4.05" fill="#3a3a3a" fill-opacity="0.24"/><rect x="66.75" y="0.00" width="4.50" height="4.05" fill="#3a3a3a" fill-opacity="0.10"/><rect x="0.00" y="4.00" width="4.50" height="4.05" fill="#3a3a3a" fill-opacity="0.25"/><rect x="4.45" y="4.00" width="4.50" height="4.05" fill="#3a3a3a" fill-opacity="0.31"/><rect x="8.90" y="4.00" width="4.50" height="4.05" fill="#3a3a3a" fill-opacity="0.27"/><rect x="13.35" y="4.00" width="4.50" height="4.05" fill="#3a3a3a" fill-opacity="0.22"/><rect x="17.80" y="4.00" width="4.50" height="4.05" fill="#3a3a3a" fill-opacity="0.08"/><rect x="22.25" y="4.00" width="4.50" height="4.05" fill="#3a3a3a" fill-opacity="0.27"/><rect x="26.70" y="4.00" width="4.50" height="4.05" fill="#3a3a3a" fill-opacity="0.32"/><rect x="31.15" y="4.00" width="4.50" height="4.05" fill="#3a3a3a" fill-opacity="0.17"/><rect x="35.60" y="4.00" width="4.50" height="4.05" fill="#3a3a3a" fill-opacity="0.27"/><rect x="40.05" y="4.00" width="4.50" height="4.05" fill="#3a3a3a" fill-opacity="0.06"/><rect x="44.50" y="4.00" width="4.50" height="4.05" fill="#3a3a3a" fill-opacity="0.21"/><rect x="48.95" y="4.00" width="4.50" height="4.05" fill="#3a3a3a" fill-opacity="0.32"/><rect x="53.40" y="4.00" width="4.50" height="4.05" fill="#3a3a3a" fill-opacity="0.26"/><rect x="57.85" y="4.00" width="4.50" height="4.05" fill="#3a3a3a" fill-opacity="0.08"/><rect x="62.30" y="4.00" width="4.50" height="4.05" fill="#3a3a3a" fill-opacity="0.31"/><rect x="66.75" y="4.00" width="4.50" height="4.05" fill="#3a3a3a" fill-opacity="0.35"/><rect x="0.00" y="8.00" width="4.50" height="4.05" fill="#3a3a3a" fill-opacity="0.08"/><rect x="4.45" y="8.00" width="4.50" height="4.05" fill="#3a3a3a" fill-opacity="0.12"/><rect x="8.90" y="8.00" width="4.50" height="4.05" fill="#3a3a3a" fill-opacity="0.10"/><rect x="13.35" y="8.00" width="4.50" height="4.05" fill="#3a3a3a" fill-opacity="0.10"/><rect x="17.80" y="8.00" width="4.50" height="4.05" fill="#3a3a3a" fill-opacity="0.04"/><rect x="22.25" y="8.00" width="4.50" height="4.05" fill="#3a3a3a" fill-opacity="0.09"/><rect x="26.70" y="8.00" width="4.50" height="4.05" fill="#3a3a3a" fill-opacity="0.10"/><rect x="31.15" y="8.00" width="4.50" height="4.05" fill="#3a3a3a" fill-opacity="0.09"/><rect x="35.60" y="8.00" width="4.50" height="4.05" fill="#3a3a3a" fill-opacity="0.19"/><rect x="40.05" y="8.00" width="4.50" height="4.05" fill="#3a3a3a" fill-opacity="0.04"/><rect x="44.50" y="8.00" width="4.50" height="4.05" fill="#3a3a3a" fill-opacity="0.18"/><rect x="48.95" y="8.00" width="4.50" height="4.05" fill="#3a3a3a" fill-opacity="0.20"/><rect x="53.40" y="8.00" width="4.50" height="4.05" fill="#3a3a3a" fill-opacity="0.04"/><rect x="57.85" y="8.00" width="4.50" height="4.05" fill="#3a3a3a" fill-opacity="0.03"/><rect x="62.30" y="8.00" width="4.50" height="4.05" fill="#3a3a3a" fill-opacity="0.20"/><rect x="66.75" y="8.00" width="4.50" height="4.05" fill="#3a3a3a" fill-opacity="0.17"/></svg>
<div class="r" style="left:2px;top:485px;width:1258px;height:2px;background:#f0f0f0"></div>
<svg class="r" style="left:20px;top:497px" width="14" height="20" viewBox="0 0 14 20"><polyline points="4.2,2.5 10.2,9.3 4.2,16.3" fill="none" stroke="#777" stroke-width="1.6"/></svg>
<div class="t" style="left:60.00px;top:499.32px;font-size:12.5px;color:#1d4aa6;-webkit-text-stroke:0.15px currentColor;">New</div>
<div class="t" style="left:175.00px;top:499.57px;font-size:12.2px;color:#484848;-webkit-text-stroke:0.15px currentColor;letter-spacing:0.05px;">9b2e2e4a26e5</div>
<svg class="r" style="left:437.5px;top:499.2px" width="14" height="14" viewBox="0 0 14 14"><polygon points="7,-0.5 13.8,13.4 0.2,13.4" fill="#f5141e"/><rect x="6.3" y="4.2" width="1.4" height="5.6" fill="#fff" opacity=".9"/><rect x="6.3" y="10.8" width="1.4" height="1.5" fill="#fff" opacity=".9"/></svg>
<div class="t" style="left:455.50px;top:500.04px;font-size:12.0px;color:#444;">High</div>
<div class="t" style="left:595.30px;top:499.93px;font-size:12.6px;color:#484848;-webkit-text-stroke:0.15px currentColor;letter-spacing:-0.3px;transform:scaleX(0.86);transform-origin:0 0;">XP</div>
<div class="t" style="left:1048.50px;top:499.74px;font-size:12.0px;color:#3a3a3a;-webkit-text-stroke:0.15px currentColor;">Oct 5 04:55:12</div>
<svg class="r" style="left:816px;top:501px;filter:blur(0.7px)" width="71.20" height="12"><rect x="0.00" y="0.00" width="4.50" height="4.05" fill="#3a3a3a" fill-opacity="0.09"/><rect x="4.45" y="0.00" width="4.50" height="4.05" fill="#3a3a3a" fill-opacity="0.09"/><rect x="8.90" y="0.00" width="4.50" height="4.05" fill="#3a3a3a" fill-opacity="0.16"/><rect x="13.35" y="0.00" width="4.50" height="4.05" fill="#3a3a3a" fill-opacity="0.08"/><rect x="17.80" y="0.00" width="4.50" height="4.05" fill="#3a3a3a" fill-opacity="0.04"/><rect x="22.25" y="0.00" width="4.50" height="4.05" fill="#3a3a3a" fill-opacity="0.08"/><rect x="26.70" y="0.00" width="4.50" height="4.05" fill="#3a3a3a" fill-opacity="0.21"/><rect x="31.15" y="0.00" width="4.50" height="4.05" fill="#3a3a3a" fill-opacity="0.24"/><rect x="35.60" y="0.00" width="4.50" height="4.05" fill="#3a3a3a" fill-opacity="0.26"/><rect x="40.05" y="0.00" width="4.50" height="4.05" fill="#3a3a3a" fill-opacity="0.03"/><rect x="44.50" y="0.00" width="4.50" height="4.05" fill="#3a3a3a" fill-opacity="0.22"/><rect x="48.95" y="0.00" width="4.50" height="4.05" fill="#3a3a3a" fill-opacity="0.21"/><rect x="53.40" y="0.00" width="4.50" height="4.05" fill="#3a3a3a" fill-opacity="0.10"/><rect x="57.85" y="0.00" width="4.50" height="4.05" fill="#3a3a3a" fill-opacity="0.08"/><rect x="62.30" y="0.00" width="4.50" height="4.05" fill="#3a3a3a" fill-opacity="0.28"/><rect x="66.75" y="0.00" width="4.50" height="4.05" fill="#3a3a3a" fill-opacity="0.11"/><rect x="0.00" y="4.00" width="4.50" height="4.05" fill="#3a3a3a" fill-opacity="0.36"/><rect x="4.45" y="4.00" width="4.50" height="4.05" fill="#3a3a3a" fill-opacity="0.23"/><rect x="8.90" y="4.00" width="4.50" height="4.05" fill="#3a3a3a" fill-opacity="0.25"/><rect x="13.35" y="4.00" width="4.50" height="4.05" fill="#3a3a3a" fill-opacity="0.37"/><rect x="17.80" y="4.00" width="4.50" height="4.05" fill="#3a3a3a" fill-opacity="0.10"/><rect x="22.25" y="4.00" width="4.50" height="4.05" fill="#3a3a3a" fill-opacity="0.18"/><rect x="26.70" y="4.00" width="4.50" height="4.05" fill="#3a3a3a" fill-opacity="0.24"/><rect x="31.15" y="4.00" width="4.50" height="4.05" fill="#3a3a3a" fill-opacity="0.26"/><rect x="35.60" y="4.00" width="4.50" height="4.05" fill="#3a3a3a" fill-opacity="0.22"/><rect x="40.05" y="4.00" width="4.50" height="4.05" fill="#3a3a3a" fill-opacity="0.06"/><rect x="44.50" y="4.00" width="4.50" height="4.05" fill="#3a3a3a" fill-opacity="0.22"/><rect x="48.95" y="4.00" width="4.50" height="4.05" fill="#3a3a3a" fill-opacity="0.31"/><rect x="53.40" y="4.00" width="4.50" height="4.05" fill="#3a3a3a" fill-opacity="0.15"/><rect x="57.85" y="4.00" width="4.50" height="4.05" fill="#3a3a3a" fill-opacity="0.08"/><rect x="62.30" y="4.00" width="4.50" height="4.05" fill="#3a3a3a" fill-opacity="0.24"/><rect x="66.75" y="4.00" width="4.50" height="4.05" fill="#3a3a3a" fill-opacity="0.15"/><rect x="0.00" y="8.00" width="4.50" height="4.05" fill="#3a3a3a" fill-opacity="0.06"/><rect x="4.45" y="8.00" width="4.50" height="4.05" fill="#3a3a3a" fill-opacity="0.12"/><rect x="8.90" y="8.00" width="4.50" height="4.05" fill="#3a3a3a" fill-opacity="0.10"/><rect x="13.35" y="8.00" width="4.50" height="4.05" fill="#3a3a3a" fill-opacity="0.02"/><rect x="17.80" y="8.00" width="4.50" height="4.05" fill="#3a3a3a" fill-opacity="0.06"/><rect x="22.25" y="8.00" width="4.50" height="4.05" fill="#3a3a3a" fill-opacity="0.16"/><rect x="26.70" y="8.00" width="4.50" height="4.05" fill="#3a3a3a" fill-opacity="0.20"/><rect x="31.15" y="8.00" width="4.50" height="4.05" fill="#3a3a3a" fill-opacity="0.02"/><rect x="35.60" y="8.00" width="4.50" height="4.05" fill="#3a3a3a" fill-opacity="0.04"/><rect x="40.05" y="8.00" width="4.50" height="4.05" fill="#3a3a3a" fill-opacity="0.02"/><rect x="44.50" y="8.00" width="4.50" height="4.05" fill="#3a3a3a" fill-opacity="0.16"/><rect x="48.95" y="8.00" width="4.50" height="4.05" fill="#3a3a3a" fill-opacity="0.04"/><rect x="53.40" y="8.00" width="4.50" height="4.05" fill="#3a3a3a" fill-opacity="0.02"/><rect x="57.85" y="8.00" width="4.50" height="4.05" fill="#3a3a3a" fill-opacity="0.02"/><rect x="62.30" y="8.00" width="4.50" height="4.05" fill="#3a3a3a" fill-opacity="0.19"/><rect x="66.75" y="8.00" width="4.50" height="4.05" fill="#3a3a3a" fill-opacity="0.17"/></svg>
<div class="r" style="left:1260px;top:161px;width:15px;height:364px;background:#fafafa;border-left:1px solid #e6e6e6;box-sizing:border-box"></div>
<div class="r" style="left:1264px;top:163px;width:9px;height:228px;background:#c1c1c1;border-radius:5px"></div>
<div class="r" style="left:2px;top:548px;width:1273px;height:285px;background:#fff;border-top:1px solid #e6e6e6;box-sizing:border-box"></div>
<div class="t" style="left:7.00px;top:564.80px;font-size:15.0px;color:#222;-webkit-text-stroke:0.3px currentColor;letter-spacing:0.1px;">Timeline</div>
<div class="t" style="left:807.50px;top:563.50px;font-size:10.4px;color:#444;">Vendor:</div>
<div class="t" style="left:859.50px;top:563.23px;font-size:11.9px;color:#0c86fb;font-weight:700;">Select Log Parser(s)</div>
<svg class="r" style="left:979px;top:564.8px" width="14" height="10" viewBox="0 0 14 10"><polyline points="2,2.5 7,7.5 12,2.5" fill="none" stroke="#0c86fb" stroke-width="1.4"/></svg>
<div class="r" style="left:1023px;top:556px;width:67px;height:22px;background:#fff;border:1px solid #4a9cf2;border-radius:3px;box-sizing:border-box"></div>
<div class="t" style="left:1034.50px;top:561.68px;font-size:11.6px;color:#1a86f0;-webkit-text-stroke:0.3px currentColor;">Show All</div>
<div class="t" style="left:1098.50px;top:562.10px;font-size:11.7px;color:#0f88fa;-webkit-text-stroke:0.3px currentColor;">Cluster</div>
<div class="r" style="left:1147px;top:566px;width:30px;height:10px;background:#8a8a8a;border-radius:5px"></div>
<div class="r" style="left:1145px;top:563.5px;width:15.5px;height:15.5px;border-radius:50%;background:#fff;border:1px solid #9a9a9a;box-sizing:border-box;box-shadow:0 1px 1px rgba(0,0,0,.15)"></div>
<div class="r" style="left:1192px;top:562px;width:2px;height:15px;background:#c8c8c8"></div>
<svg class="r" style="left:1200px;top:560px" width="18" height="18" viewBox="0 0 18 18"><circle cx="7.5" cy="6.9" r="5" fill="none" stroke="#1a88f5" stroke-width="1.4"/><line x1="10.2" y1="11.2" x2="13.4" y2="15.6" stroke="#1a88f5" stroke-width="1.4"/><line x1="5.1" y1="6.9" x2="9.9" y2="6.9" stroke="#1a88f5" stroke-width="1.3"/><line x1="7.5" y1="4.5" x2="7.5" y2="9.3" stroke="#1a88f5" stroke-width="1.3"/></svg>
<svg class="r" style="left:1224px;top:560px" width="18" height="18" viewBox="0 0 18 18"><circle cx="7.6" cy="6.9" r="5" fill="none" stroke="#1a88f5" stroke-width="1.4"/><line x1="10.3" y1="11.2" x2="13.5" y2="15.6" stroke="#1a88f5" stroke-width="1.4"/><line x1="5.1" y1="6.9" x2="10.1" y2="6.9" stroke="#1a88f5" stroke-width="1.3"/></svg>
<svg class="r" style="left:1248px;top:561px" width="18" height="16" viewBox="0 0 18 16"><path d="M2.9,8.2 A5.8,5.8 0 0 1 13.4,4.6" fill="none" stroke="#1a88f5" stroke-width="1.3"/><polygon points="14.4,2.6 14.6,6.6 10.9,5.4" fill="#1a88f5"/><path d="M14.4,8.6 A5.8,5.8 0 0 1 4.0,12.0" fill="none" stroke="#1a88f5" stroke-width="1.3"/><polygon points="3.0,13.8 2.8,9.8 6.6,11.2" fill="#1a88f5"/></svg>
<div class="r" style="left:2px;top:594px;width:1273px;height:1px;background:#f0f0f0"></div>
<div class="r" style="left:374px;top:595px;width:1px;height:217px;background:#e9e9e9"></div>
<div class="r" style="left:472px;top:595px;width:1px;height:217px;background:#e9e9e9"></div>
<div class="r" style="left:570px;top:595px;width:1px;height:217px;background:#e9e9e9"></div>
<div class="r" style="left:668px;top:595px;width:1px;height:217px;background:#e9e9e9"></div>
<div class="r" style="left:766px;top:595px;width:1px;height:217px;background:#e9e9e9"></div>
<div class="r" style="left:864px;top:595px;width:1px;height:217px;background:#e9e9e9"></div>
<div class="r" style="left:963px;top:595px;width:1px;height:217px;background:#e9e9e9"></div>
<div class="r" style="left:1061px;top:595px;width:1px;height:217px;background:#e9e9e9"></div>
<div class="r" style="left:1159px;top:595px;width:1px;height:217px;background:#e9e9e9"></div>
<div class="r" style="left:1257px;top:595px;width:1px;height:217px;background:#e9e9e9"></div>
<div class="r" style="left:295px;top:595px;width:1px;height:238px;background:#b9b9b9"></div>
<div class="r" style="left:2px;top:763px;width:1273px;height:1px;background:#e9e9e9"></div>
<div class="r" style="left:2px;top:788px;width:1273px;height:1px;background:#bdbdbd"></div>
<div class="t" style="left:6.60px;top:721.45px;font-size:14.0px;color:#333;">Default Juniper SRX Parser</div>
<div class="t" style="left:6.60px;top:769.03px;font-size:14.5px;color:#333;">Default McAfee ePolicy Orchestrator Parser</div>
<div class="r" style="left:296px;top:789px;width:979px;height:30px;overflow:hidden">
<div class="t" style="left:-9.60px;top:10.83px;font-size:10.6px;color:#555">04:50</div>
<div class="t" style="left:88.50px;top:10.83px;font-size:10.6px;color:#555">04:51</div>
<div class="t" style="left:186.60px;top:10.83px;font-size:10.6px;color:#555">04:52</div>
<div class="t" style="left:284.70px;top:10.83px;font-size:10.6px;color:#555">04:53</div>
<div class="t" style="left:382.80px;top:10.83px;font-size:10.6px;color:#555">04:54</div>
<div class="t" style="left:480.90px;top:10.83px;font-size:10.6px;color:#555">04:55</div>
<div class="t" style="left:579.00px;top:10.83px;font-size:10.6px;color:#555">04:56</div>
<div class="t" style="left:677.10px;top:10.83px;font-size:10.6px;color:#555">04:57</div>
<div class="t" style="left:775.20px;top:10.83px;font-size:10.6px;color:#555">04:58</div>
<div class="t" style="left:873.30px;top:10.83px;font-size:10.6px;color:#555">04:59</div>
<div class="t" style="left:971.40px;top:10.83px;font-size:10.6px;color:#555">04:60</div>
</div>
<div class="t" style="left:305.50px;top:823.08px;font-size:10.3px;color:#222;font-weight:700;">Wed 7 October</div>
<div class="r" style="left:682px;top:697px;width:209px;height:26px;background:#dce4ee;border-radius:3px;box-shadow:1px 2px 3px rgba(0,0,0,0.45)"></div>
<svg class="r" style="left:687px;top:703px" width="13.5" height="13.5" viewBox="0 0 14 14"><polygon points="7,-0.5 13.8,13.4 0.2,13.4" fill="#f5141e"/><rect x="6.3" y="4.2" width="1.4" height="5.6" fill="#fff" opacity=".9"/><rect x="6.3" y="10.8" width="1.4" height="1.5" fill="#fff" opacity=".9"/></svg>
<div class="t" style="left:703.00px;top:704.31px;font-size:10.5px;color:#333;">New</div>
<div class="t" style="left:740.00px;top:705.03px;font-size:10.0px;color:#404040;font-weight:700;letter-spacing:-0.15px;">IDP ATTACK LOG EVENT DROP</div>
<div class="r" style="left:682px;top:733px;width:209px;height:26px;background:#dce4ee;border-radius:3px;box-shadow:1px 2px 3px rgba(0,0,0,0.45)"></div>
<svg class="r" style="left:687px;top:739px" width="13.5" height="13.5" viewBox="0 0 14 14"><polygon points="7,-0.5 13.8,13.4 0.2,13.4" fill="#f5141e"/><rect x="6.3" y="4.2" width="1.4" height="5.6" fill="#fff" opacity=".9"/><rect x="6.3" y="10.8" width="1.4" height="1.5" fill="#fff" opacity=".9"/></svg>
<div class="t" style="left:703.00px;top:740.31px;font-size:10.5px;color:#333;">New</div>
<div class="t" style="left:740.00px;top:741.03px;font-size:10.0px;color:#404040;font-weight:700;letter-spacing:-0.15px;">IDP ATTACK LOG EVENT DROP</div>
</body></html>
